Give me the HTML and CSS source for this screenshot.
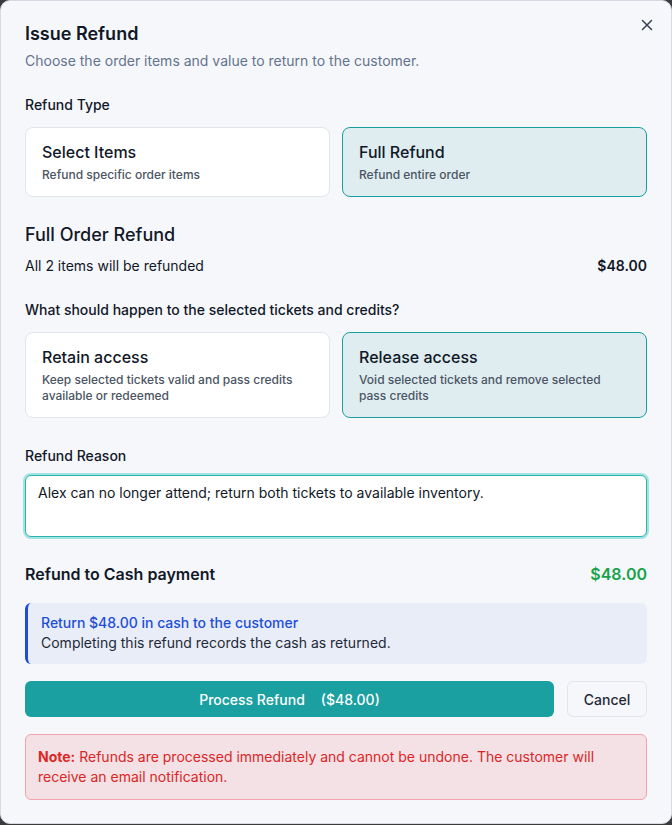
FILE: index.html
```html
<!DOCTYPE html>
<html lang="en">
<head>
    <meta charset="UTF-8">
    <title>Issue Refund</title>
    <link rel="stylesheet" href="styles.css">
</head>
<body>
    <div class="dialog">
        <button class="close-btn" aria-label="Close">
            <svg width="16" height="16" viewBox="0 0 16 16" fill="none" stroke="#374151" stroke-width="1.5" stroke-linecap="round">
                <path d="M3.5 3.5l9 9M12.5 3.5l-9 9"/>
            </svg>
        </button>

        <h2 class="title">Issue Refund</h2>
        <p class="subtitle">Choose the order items and value to return to the customer.</p>

        <div class="label section">Refund Type</div>
        <div class="options">
            <div class="option">
                <div class="option-title">Select Items</div>
                <div class="option-desc">Refund specific order items</div>
            </div>
            <div class="option selected">
                <div class="option-title">Full Refund</div>
                <div class="option-desc">Refund entire order</div>
            </div>
        </div>

        <h3 class="heading section">Full Order Refund</h3>
        <div class="summary-row">
            <span>All 2 items will be refunded</span>
            <span class="amount">$48.00</span>
        </div>

        <div class="label section">What should happen to the selected tickets and credits?</div>
        <div class="options">
            <div class="option">
                <div class="option-title">Retain access</div>
                <div class="option-desc">Keep selected tickets valid and pass credits available or redeemed</div>
            </div>
            <div class="option selected">
                <div class="option-title">Release access</div>
                <div class="option-desc">Void selected tickets and remove selected pass credits</div>
            </div>
        </div>

        <div class="label reason-label">Refund Reason</div>
        <textarea class="reason">Alex can no longer attend; return both tickets to available inventory.</textarea>

        <div class="payment-row">
            <span>Refund to Cash payment</span>
            <span class="payment-amount">$48.00</span>
        </div>

        <div class="info-box">
            <div class="info-title">Return $48.00 in cash to the customer</div>
            <div>Completing this refund records the cash as returned.</div>
        </div>

        <div class="actions">
            <button class="btn-primary"><span>Process Refund</span><span class="btn-amount">($48.00)</span></button>
            <button class="btn-secondary">Cancel</button>
        </div>

        <div class="note">
            <p class="note-text"><strong>Note:</strong> Refunds are processed immediately and cannot be undone. The customer will receive an email notification.</p>
        </div>
    </div>
</body>
</html>
```

FILE: styles.css
```css
* {
    box-sizing: border-box;
}

body {
    margin: 0;
    background: #3b3b3f;
    font-family: Inter, "Noto Sans", sans-serif;
    color: #111827;
}

.dialog {
    position: relative;
    width: 672px;
    height: 824px;
    padding: 24px;
    background: #f6f7fb;
    border: 1px solid #d6dae2;
    border-radius: 10px;
}

.close-btn {
    position: absolute;
    top: 16px;
    right: 16px;
    width: 16px;
    height: 16px;
    padding: 0;
    border: none;
    background: none;
    display: flex;
}

.title {
    margin: 0;
    font-size: 18px;
    line-height: 18px;
    font-weight: 600;
}

.subtitle {
    margin: 8px 0 0;
    font-size: 14px;
    line-height: 20px;
    color: #64748b;
}

.section {
    margin-top: 24px;
}

.label {
    font-size: 14px;
    line-height: 20px;
    font-weight: 500;
}

.options {
    display: grid;
    grid-template-columns: 1fr 1fr;
    gap: 12px;
    margin-top: 12px;
}

.option {
    padding: 12px 16px 13px;
    background: #fff;
    border: 1px solid #e2e5ec;
    border-radius: 8px;
}

.option.selected {
    background: #dfedf1;
    border-color: #1a9fa0;
}

.option-title {
    font-size: 16px;
    line-height: 24px;
    font-weight: 500;
}

.option-desc {
    margin-top: 3px;
    font-size: 12px;
    line-height: 16px;
    font-weight: 500;
    color: #4b5563;
}

.heading {
    margin-bottom: 0;
    font-size: 18px;
    line-height: 28px;
    font-weight: 500;
}

.summary-row {
    display: flex;
    justify-content: space-between;
    margin-top: 7px;
    font-size: 14px;
    line-height: 20px;
}

.amount {
    font-weight: 600;
}

.reason-label {
    margin-top: 28px;
}

.reason {
    display: block;
    width: 100%;
    height: 62px;
    margin-top: 9px;
    padding: 7px 12px;
    font-family: inherit;
    font-size: 14px;
    line-height: 20px;
    color: #111827;
    background: #fff;
    border: 1px solid #2bb3b0;
    border-radius: 6px;
    box-shadow: 0 0 0 2px #a3e4e1;
    resize: none;
    outline: none;
}

.payment-row {
    display: flex;
    justify-content: space-between;
    margin-top: 25px;
    font-size: 16px;
    line-height: 24px;
    font-weight: 600;
}

.payment-amount {
    color: #16a34a;
}

.info-box {
    margin-top: 17px;
    padding: 10px 12px 11px 13px;
    background: #e8edf8;
    border-left: 3px solid #1d4ed8;
    border-radius: 6px;
    font-size: 14px;
    line-height: 20px;
    color: #1f2937;
}

.info-title {
    color: #1d4ed8;
    font-weight: 500;
}

.actions {
    display: flex;
    gap: 13px;
    margin-top: 17px;
}

.btn-primary {
    flex: 1;
    height: 36px;
    border: none;
    border-radius: 6px;
    background: #1aa0a0;
    color: #fff;
    font-family: inherit;
    font-size: 14px;
    font-weight: 500;
}

.btn-amount {
    margin-left: 16px;
}

.btn-secondary {
    width: 80px;
    height: 36px;
    border: 1px solid #e2e5ec;
    border-radius: 6px;
    background: #f6f7fb;
    color: #1f2937;
    font-family: inherit;
    font-size: 14px;
    font-weight: 500;
}

.note {
    margin-top: 17px;
    padding: 12px;
    background: #f3e1e5;
    border: 1px solid #f2a3ab;
    border-radius: 6px;
}

.note-text {
    margin: 0;
    font-size: 14px;
    line-height: 20px;
    color: #dc2626;
}
```
